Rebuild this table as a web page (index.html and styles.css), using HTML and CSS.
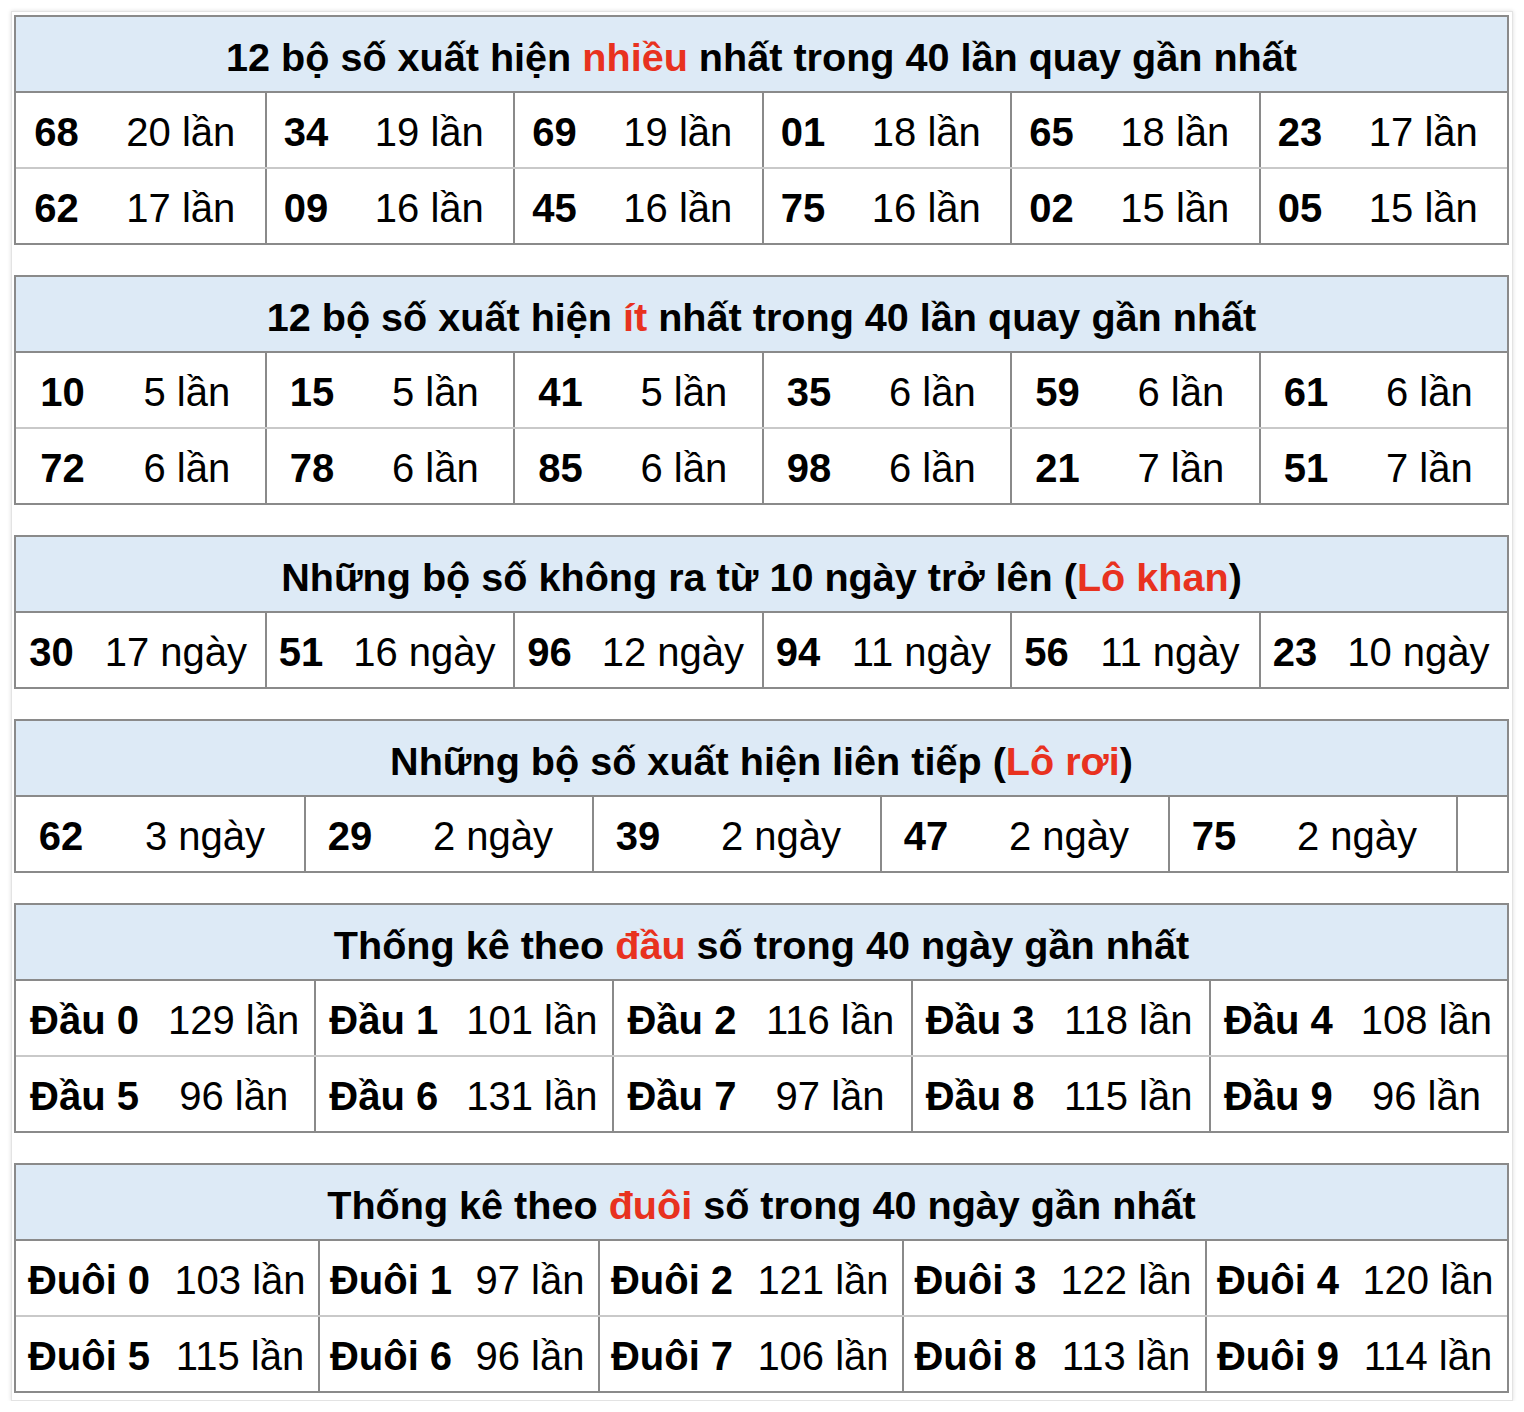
FILE: index.html
```html
<!DOCTYPE html>
<html lang="vi">
<head>
<meta charset="utf-8">
<title>Thống kê lô tô</title>
<link rel="stylesheet" href="styles.css">
</head>
<body>
<div class="wrap">
  <section class="tbl t1">
    <div class="head"><span>12 bộ số xuất hiện <span class="hl">nhiều</span> nhất trong 40 lần quay gần nhất</span></div>
    <div class="row">
      <div class="cell n">68</div><div class="cell c">20 lần</div>
      <div class="cell n">34</div><div class="cell c">19 lần</div>
      <div class="cell n">69</div><div class="cell c">19 lần</div>
      <div class="cell n">01</div><div class="cell c">18 lần</div>
      <div class="cell n">65</div><div class="cell c">18 lần</div>
      <div class="cell n">23</div><div class="cell c">17 lần</div>
    </div>
    <div class="row">
      <div class="cell n">62</div><div class="cell c">17 lần</div>
      <div class="cell n">09</div><div class="cell c">16 lần</div>
      <div class="cell n">45</div><div class="cell c">16 lần</div>
      <div class="cell n">75</div><div class="cell c">16 lần</div>
      <div class="cell n">02</div><div class="cell c">15 lần</div>
      <div class="cell n">05</div><div class="cell c">15 lần</div>
    </div>
  </section>

  <section class="tbl t2">
    <div class="head"><span>12 bộ số xuất hiện <span class="hl">ít</span> nhất trong 40 lần quay gần nhất</span></div>
    <div class="row">
      <div class="cell n">10</div><div class="cell c">5 lần</div>
      <div class="cell n">15</div><div class="cell c">5 lần</div>
      <div class="cell n">41</div><div class="cell c">5 lần</div>
      <div class="cell n">35</div><div class="cell c">6 lần</div>
      <div class="cell n">59</div><div class="cell c">6 lần</div>
      <div class="cell n">61</div><div class="cell c">6 lần</div>
    </div>
    <div class="row">
      <div class="cell n">72</div><div class="cell c">6 lần</div>
      <div class="cell n">78</div><div class="cell c">6 lần</div>
      <div class="cell n">85</div><div class="cell c">6 lần</div>
      <div class="cell n">98</div><div class="cell c">6 lần</div>
      <div class="cell n">21</div><div class="cell c">7 lần</div>
      <div class="cell n">51</div><div class="cell c">7 lần</div>
    </div>
  </section>

  <section class="tbl t3">
    <div class="head"><span>Những bộ số không ra từ 10 ngày trở lên (<span class="hl">Lô khan</span>)</span></div>
    <div class="row">
      <div class="cell n">30</div><div class="cell c">17 ngày</div>
      <div class="cell n">51</div><div class="cell c">16 ngày</div>
      <div class="cell n">96</div><div class="cell c">12 ngày</div>
      <div class="cell n">94</div><div class="cell c">11 ngày</div>
      <div class="cell n">56</div><div class="cell c">11 ngày</div>
      <div class="cell n">23</div><div class="cell c">10 ngày</div>
    </div>
  </section>

  <section class="tbl t4">
    <div class="head"><span>Những bộ số xuất hiện liên tiếp (<span class="hl">Lô rơi</span>)</span></div>
    <div class="row">
      <div class="cell n">62</div><div class="cell c">3 ngày</div>
      <div class="cell n">29</div><div class="cell c">2 ngày</div>
      <div class="cell n">39</div><div class="cell c">2 ngày</div>
      <div class="cell n">47</div><div class="cell c">2 ngày</div>
      <div class="cell n">75</div><div class="cell c">2 ngày</div>
      <div class="cell n"></div><div class="cell c"></div>
    </div>
  </section>

  <section class="tbl t5">
    <div class="head"><span>Thống kê theo <span class="hl">đầu</span> số trong 40 ngày gần nhất</span></div>
    <div class="row">
      <div class="cell n">Đầu 0</div><div class="cell c">129 lần</div>
      <div class="cell n">Đầu 1</div><div class="cell c">101 lần</div>
      <div class="cell n">Đầu 2</div><div class="cell c">116 lần</div>
      <div class="cell n">Đầu 3</div><div class="cell c">118 lần</div>
      <div class="cell n">Đầu 4</div><div class="cell c">108 lần</div>
    </div>
    <div class="row">
      <div class="cell n">Đầu 5</div><div class="cell c">96 lần</div>
      <div class="cell n">Đầu 6</div><div class="cell c">131 lần</div>
      <div class="cell n">Đầu 7</div><div class="cell c">97 lần</div>
      <div class="cell n">Đầu 8</div><div class="cell c">115 lần</div>
      <div class="cell n">Đầu 9</div><div class="cell c">96 lần</div>
    </div>
  </section>

  <section class="tbl t6">
    <div class="head"><span>Thống kê theo <span class="hl">đuôi</span> số trong 40 ngày gần nhất</span></div>
    <div class="row">
      <div class="cell n">Đuôi 0</div><div class="cell c">103 lần</div>
      <div class="cell n">Đuôi 1</div><div class="cell c">97 lần</div>
      <div class="cell n">Đuôi 2</div><div class="cell c">121 lần</div>
      <div class="cell n">Đuôi 3</div><div class="cell c">122 lần</div>
      <div class="cell n">Đuôi 4</div><div class="cell c">120 lần</div>
    </div>
    <div class="row">
      <div class="cell n">Đuôi 5</div><div class="cell c">115 lần</div>
      <div class="cell n">Đuôi 6</div><div class="cell c">96 lần</div>
      <div class="cell n">Đuôi 7</div><div class="cell c">106 lần</div>
      <div class="cell n">Đuôi 8</div><div class="cell c">113 lần</div>
      <div class="cell n">Đuôi 9</div><div class="cell c">114 lần</div>
    </div>
  </section>
</div>
</body>
</html>
```

FILE: styles.css
```css
html, body {
  margin: 0;
  padding: 0;
  background: #ffffff;
}

body {
  font-family: "Liberation Sans", Arial, Helvetica, sans-serif;
  color: #000000;
}

.wrap {
  box-sizing: border-box;
  width: 1502px;
  margin: 11px 0 0 11px;
  padding: 3px 3px 7px 2px;
  border: 1px solid #e3e3e3;
  box-shadow: 0 0 4px rgba(0, 0, 0, 0.14);
  background: #ffffff;
}

.tbl {
  border: 2px solid #8a8a8a;
  margin-bottom: 30px;
}

.tbl:last-child {
  margin-bottom: 0;
}

.head {
  box-sizing: border-box;
  height: 76px;
  display: flex;
  align-items: center;
  justify-content: center;
  padding-top: 6px;
  background: #ddeaf6;
  border-bottom: 2px solid #8a8a8a;
  font-size: 39.6px;
  font-weight: bold;
  white-space: nowrap;
}

.hl {
  color: #e8321f;
}

.row {
  display: grid;
  height: 74px;
}

.row + .row {
  border-top: 2px solid #c9c9c9;
}

.cell {
  display: flex;
  align-items: center;
  justify-content: center;
  box-sizing: border-box;
  min-width: 0;
  padding-top: 5px;
  font-size: 40px;
  white-space: nowrap;
}

.n {
  font-weight: bold;
}

.n:not(:first-child) {
  border-left: 2px solid #8a8a8a;
}

.t1 .row {
  grid-template-columns: repeat(6, 81fr 167fr);
}

.t2 .row {
  grid-template-columns: repeat(6, 93fr 155fr);
}

.t3 .row {
  grid-template-columns: repeat(6, 71fr 177fr);
}

.t4 .row {
  grid-template-columns: repeat(5, 90fr 198fr) 26fr 25fr;
}

.t5 .row {
  grid-template-columns: repeat(5, 137fr 161fr);
}

.t6 .row {
  grid-template-columns: 146fr 156fr 144fr 136fr 146fr 158fr 145fr 158fr 144fr 158fr;
}
```
